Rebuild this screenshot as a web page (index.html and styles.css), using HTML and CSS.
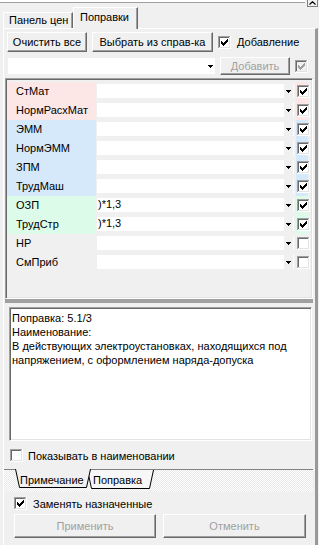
FILE: index.html
```html
<!DOCTYPE html>
<html lang="ru">

<head>
    <meta charset="UTF-8">
    <title>Поправки</title>
    <link rel="stylesheet" href="styles.css">
</head>

<body>
    <!-- shared checkbox pictures -->
    <svg class="defs" width="0" height="0" aria-hidden="true">
        <defs>
            <symbol id="frame" viewBox="0 0 13 13">
                <path d="M0 0h12v1H1v11H0z" fill="#a0a0a0"/>
                <path d="M1 1h10v1H2v9H1z" fill="#696969"/>
                <path d="M12 0h1v13H0v-1h12z" fill="#fff"/>
                <path d="M11 1h1v11H1v-1h10z" fill="#e3e3e3"/>
            </symbol>
            <symbol id="cb-on" viewBox="0 0 13 13">
                <rect x="2" y="2" width="9" height="9" fill="#fff"/>
                <use href="#frame" width="13" height="13"/>
                <path d="M3 5h1v1h1v1h1v-1h1v-1h1v-1h1v-1h1v3h-1v1h-1v1h-1v1h-1v1h-1v-1h-1v-1h-1z" fill="#000"/>
            </symbol>
            <symbol id="cb-off" viewBox="0 0 13 13">
                <rect x="2" y="2" width="9" height="9" fill="#fff"/>
                <use href="#frame" width="13" height="13"/>
            </symbol>
            <symbol id="cb-dis" viewBox="0 0 13 13">
                <rect x="2" y="2" width="9" height="9" fill="#f0f0f0"/>
                <use href="#frame" width="13" height="13"/>
                <path d="M3 5h1v1h1v1h1v-1h1v-1h1v-1h1v-1h1v3h-1v1h-1v1h-1v1h-1v1h-1v-1h-1v-1h-1z" fill="#a0a0a0"/>
            </symbol>
            <symbol id="arrow" viewBox="0 0 5 3">
                <path d="M0 0h5v1h-1v1h-1v1h-1v-1h-1v-1h-1z" fill="#000"/>
            </symbol>
        </defs>
    </svg>

    <div class="app">
        <div class="topstrip">
            <div class="topfield"></div>
            <div class="scrollup">
                <svg width="7" height="4" viewBox="0 0 7 4"><path d="M0.5 3.5L3.5 0.8 6.5 3.5" fill="none" stroke="#000" stroke-width="1.2"/></svg>
            </div>
        </div>

        <div class="tabs">
            <div class="tab">Панель цен</div>
            <div class="tab active">Поправки</div>
        </div>

        <div class="panel">
            <div class="toolbar">
                <button class="btn btn-clear">Очистить все</button>
                <button class="btn btn-pick">Выбрать из справ-ка</button>
                <label class="check"><svg class="cb"><use href="#cb-on"/></svg>Добавление</label>
            </div>

            <div class="addrow">
                <div class="combo"><svg class="arr"><use href="#arrow"/></svg></div>
                <button class="btn btn-add" disabled>Добавить</button>
                <svg class="cb"><use href="#cb-dis"/></svg>
            </div>

            <div class="grid">
                <div class="row pink">
                    <div class="lbl">СтМат</div>
                    <div class="val"></div>
                    <div class="drop"><svg class="arr"><use href="#arrow"/></svg></div>
                    <div class="chk"><svg class="cb"><use href="#cb-on"/></svg></div>
                </div>
                <div class="row pink">
                    <div class="lbl">НормРасхМат</div>
                    <div class="val"></div>
                    <div class="drop"><svg class="arr"><use href="#arrow"/></svg></div>
                    <div class="chk"><svg class="cb"><use href="#cb-on"/></svg></div>
                </div>
                <div class="row blue">
                    <div class="lbl">ЭММ</div>
                    <div class="val"></div>
                    <div class="drop"><svg class="arr"><use href="#arrow"/></svg></div>
                    <div class="chk"><svg class="cb"><use href="#cb-on"/></svg></div>
                </div>
                <div class="row blue">
                    <div class="lbl">НормЭММ</div>
                    <div class="val"></div>
                    <div class="drop"><svg class="arr"><use href="#arrow"/></svg></div>
                    <div class="chk"><svg class="cb"><use href="#cb-on"/></svg></div>
                </div>
                <div class="row blue">
                    <div class="lbl">ЗПМ</div>
                    <div class="val"></div>
                    <div class="drop"><svg class="arr"><use href="#arrow"/></svg></div>
                    <div class="chk"><svg class="cb"><use href="#cb-on"/></svg></div>
                </div>
                <div class="row blue">
                    <div class="lbl">ТрудМаш</div>
                    <div class="val"></div>
                    <div class="drop"><svg class="arr"><use href="#arrow"/></svg></div>
                    <div class="chk"><svg class="cb"><use href="#cb-on"/></svg></div>
                </div>
                <div class="row green">
                    <div class="lbl">ОЗП</div>
                    <div class="val">)*1,3</div>
                    <div class="drop"><svg class="arr"><use href="#arrow"/></svg></div>
                    <div class="chk"><svg class="cb"><use href="#cb-on"/></svg></div>
                </div>
                <div class="row green">
                    <div class="lbl">ТрудСтр</div>
                    <div class="val">)*1,3</div>
                    <div class="drop"><svg class="arr"><use href="#arrow"/></svg></div>
                    <div class="chk"><svg class="cb"><use href="#cb-on"/></svg></div>
                </div>
                <div class="row">
                    <div class="lbl">НР</div>
                    <div class="val"></div>
                    <div class="drop"><svg class="arr"><use href="#arrow"/></svg></div>
                    <div class="chk"><svg class="cb"><use href="#cb-off"/></svg></div>
                </div>
                <div class="row">
                    <div class="lbl">СмПриб</div>
                    <div class="val"></div>
                    <div class="drop"><svg class="arr"><use href="#arrow"/></svg></div>
                    <div class="chk"><svg class="cb"><use href="#cb-off"/></svg></div>
                </div>
            </div>

            <div class="splitter"></div>

            <div class="memo">
                <div>Поправка: 5.1/3</div>
                <div>Наименование:</div>
                <div>В действующих электроустановках, находящихся под<br>напряжением, с оформлением наряда-допуска</div>
            </div>

            <label class="check show-name"><svg class="cb"><use href="#cb-off"/></svg>Показывать в наименовании</label>

            <div class="btabs">
                <div class="btab sel">
                    <svg class="btab-bg" width="76" height="19" viewBox="0 0 76 19">
                        <polygon points="0,0 4.5,18.5 71.5,18.5 76,0" fill="#f0f0f0"/>
                        <polyline points="0.5,0 4.5,18.5 71.5,18.5 75.5,0" fill="none" stroke="#000"/>
                    </svg>
                    <span>Примечание</span>
                </div>
                <div class="btab">
                    <svg class="btab-bg" width="67" height="19" viewBox="0 0 67 19">
                        <polygon points="0,0 4.5,18.5 62.5,18.5 67,0" fill="#f7f7f7"/>
                        <polyline points="0.5,0 4.5,18.5 62.5,18.5 66.5,0" fill="none" stroke="#000"/>
                    </svg>
                    <span>Поправка</span>
                </div>
            </div>

            <label class="check replace"><svg class="cb"><use href="#cb-on"/></svg>Заменять назначенные</label>

            <div class="actions">
                <button class="btn btn-apply" disabled>Применить</button>
                <button class="btn btn-cancel" disabled>Отменить</button>
            </div>
        </div>
    </div>
</body>

</html>
```

FILE: styles.css
```css
body {
    margin: 0;
    background-color: #f0f0f0;
    font-family: "Liberation Sans", Arial, sans-serif;
    font-size: 11px;
    color: #000;
}

.defs {
    position: absolute;
    width: 0;
    height: 0;
}

.app {
    width: 319px;
    height: 545px;
    display: flex;
    flex-direction: column;
    overflow: hidden;
}

/* top edge of the form above */
.topstrip {
    display: flex;
    height: 7px;
}

.topfield {
    flex: 1;
    height: 2px;
    background-color: #fff;
    border-bottom: 1px solid #a0a0a0;
}

.scrollup {
    width: 9px;
    height: 6px;
    margin: 0 1px 0 2px;
    border: 1px solid #808080;
    border-top: none;
    display: flex;
    align-items: center;
    justify-content: center;
}

/* page tabs */
.tabs {
    display: flex;
    align-items: flex-end;
    height: 21px;
    padding-left: 3px;
}

.tab {
    box-sizing: border-box;
    width: 70px;
    height: 16px;
    padding-left: 5px;
    line-height: 14px;
    white-space: nowrap;
    border: 1px solid #fff;
    border-right-color: #696969;
    border-bottom: none;
    box-shadow: inset -1px 0 #a0a0a0;
}

.tab.active {
    position: relative;
    z-index: 1;
    width: 65px;
    height: 22px;
    margin-bottom: -1px;
    padding-left: 6px;
    line-height: 18px;
    background-color: #f0f0f0;
}

.panel {
    flex: 1;
    display: flex;
    flex-direction: column;
    margin: 0 1px 0 3px;
    border-top: 1px solid #fff;
    border-left: 1px solid #fff;
    border-right: 3px solid #999;
}

/* buttons */
.btn {
    box-sizing: border-box;
    padding: 0;
    font-family: inherit;
    font-size: 11px;
    color: #000;
    background-color: #f0f0f0;
    border: 1px solid;
    border-color: #fff #696969 #696969 #fff;
    box-shadow: inset -1px -1px #a0a0a0;
}

.btn:disabled {
    color: #a0a0a0;
}

.check {
    display: flex;
    align-items: center;
    gap: 6px;
}

.cb {
    width: 13px;
    height: 13px;
    flex: none;
}

.arr {
    width: 5px;
    height: 3px;
}

.toolbar {
    display: flex;
    align-items: center;
    gap: 5px;
    height: 20px;
    padding: 3px 0 0 3px;
}

.btn-clear {
    width: 80px;
    height: 20px;
}

.btn-pick {
    width: 121px;
    height: 20px;
}

.addrow {
    display: flex;
    align-items: center;
    height: 18px;
    margin-top: 5px;
    padding-left: 4px;
}

.combo {
    width: 207px;
    height: 16px;
    background-color: #fff;
    display: flex;
    align-items: center;
    justify-content: flex-end;
    padding-right: 2px;
    box-sizing: border-box;
}

.btn-add {
    width: 70px;
    height: 18px;
    margin: 0 5px;
}

/* coefficients grid */
.grid {
    box-sizing: border-box;
    height: 221px;
    margin: 3px 2px 0 1px;
    padding: 3px 1px 0 1px;
    border: 1px solid;
    border-color: #a0a0a0 #fff #fff #a0a0a0;
    box-shadow: inset 1px 1px #696969, inset -1px -1px #e3e3e3;
}

.row {
    display: grid;
    grid-template-columns: 89px 188px 10px 14px;
    column-gap: 0;
    height: 19px;
}

.lbl {
    padding-left: 9px;
    line-height: 19px;
}

.val {
    height: 14px;
    margin: 2px 0 0 1px;
    padding-left: 1px;
    background-color: #fff;
    line-height: 13px;
}

.drop {
    height: 14px;
    margin-top: 2px;
    border-right: 1px solid #fff;
    display: flex;
    align-items: center;
    justify-content: center;
}

.chk {
    margin-left: 2px;
    padding: 3px 0 0 1px;
}

.pink .lbl,
.pink .chk {
    background-color: #fde6e6;
}

.blue .lbl,
.blue .chk {
    background-color: #d6e9fb;
}

.green .lbl,
.green .chk {
    background-color: #dcfbe8;
}

.splitter {
    height: 4px;
    margin: 0 2px 0 1px;
    background-color: #a0a0a0;
}

/* description box */
.memo {
    box-sizing: border-box;
    height: 134px;
    margin: 4px 3px 0 5px;
    padding: 3px 2px;
    background-color: #fff;
    line-height: 14px;
    border: 1px solid;
    border-color: #a0a0a0 #fff #fff #a0a0a0;
    box-shadow: inset 1px 1px #696969, inset -1px -1px #e3e3e3;
}

.show-name {
    height: 13px;
    margin-top: 8px;
    padding-left: 6px;
    gap: 5px;
}

/* bottom tab set */
.btabs {
    display: flex;
    height: 22px;
    margin: 7px 2px 0 0;
    padding-left: 11px;
    border-top: 1px solid #808080;
    background-color: #fff;
    background-image: repeating-conic-gradient(#e8e8e8 0 25%, #fff 0 50%);
    background-size: 2px 2px;
}

.btab {
    position: relative;
    z-index: 1;
    width: 76px;
    height: 19px;
}

.btab + .btab {
    width: 67px;
    margin-left: -4px;
    z-index: 0;
}

.btab.sel {
    margin-top: -1px;
    height: 20px;
}

.btab-bg {
    position: absolute;
    left: 0;
    top: 0;
}

.btab span {
    position: relative;
    display: block;
    padding: 2px 0 0 6px;
    line-height: 17px;
    white-space: nowrap;
}

.btab.sel span {
    padding: 3px 0 0 5px;
}

.replace {
    height: 13px;
    margin-top: 5px;
    padding-left: 10px;
}

.actions {
    display: flex;
    gap: 7px;
    margin-top: 4px;
    padding-left: 10px;
}

.btn-apply {
    width: 142px;
    height: 24px;
}

.btn-cancel {
    width: 143px;
    height: 24px;
}
```
